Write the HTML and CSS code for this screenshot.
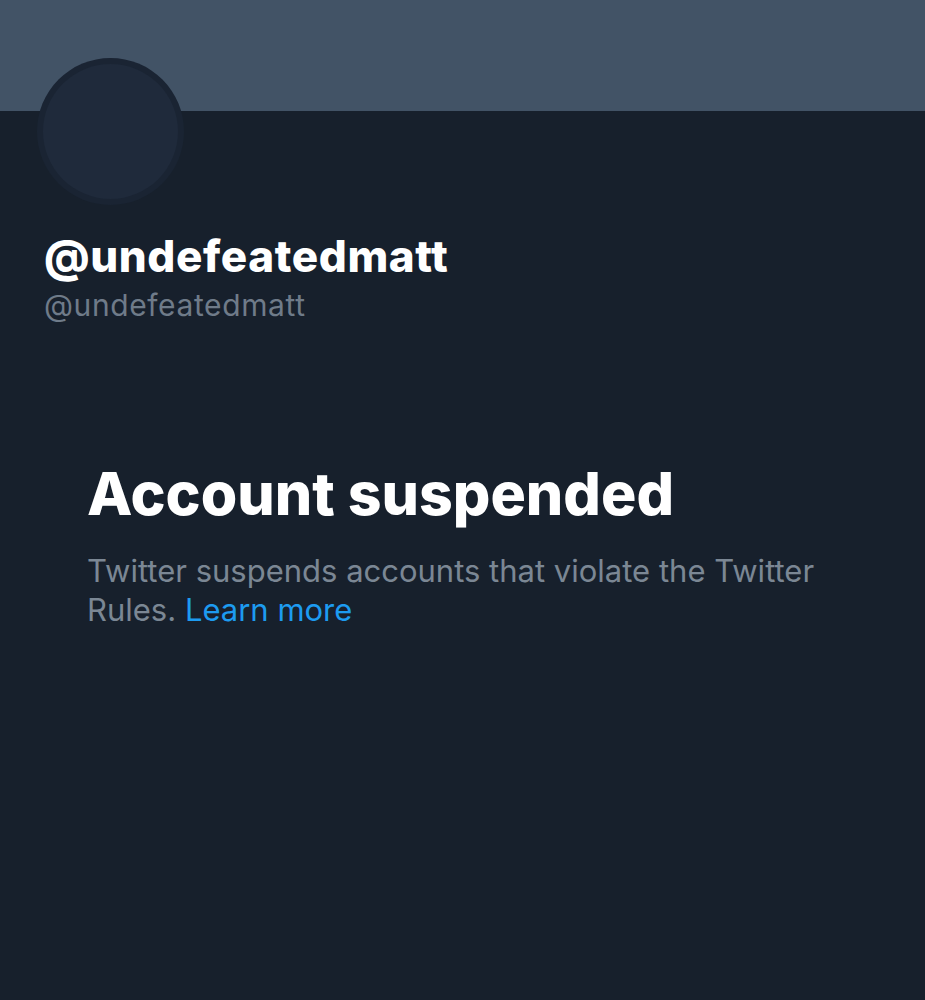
FILE: index.html
```html
<!DOCTYPE html>
<html>
<head>
<meta charset="utf-8">
<link rel="stylesheet" href="styles.css">
</head>
<body>
<div class="page">
  <div class="banner"></div>
  <div class="profile">
    <div class="avatar"><div class="avatar-inner"></div></div>
    <div class="name">@undefeatedmatt</div>
    <div class="handle">@undefeatedmatt</div>
  </div>
  <div class="notice">
    <h1 class="notice-title">Account suspended</h1>
    <p class="notice-text">Twitter suspends accounts that violate the Twitter Rules. <a class="link" href="#">Learn more</a></p>
  </div>
</div>
</body>
</html>
```
FILE: styles.css
```css
html, body {
  margin: 0;
  padding: 0;
  background: #17202c;
}
.page {
  width: 925px;
  height: 1000px;
  background: #17202c;
  font-family: Inter, "Liberation Sans", Arial, sans-serif;
  overflow: hidden;
}
.banner {
  height: 111px;
  background: #425366;
}
.profile {
  padding: 0 44px;
}
.avatar {
  width: 147px;
  height: 147px;
  margin-top: -53px;
  margin-left: -7px;
  border-radius: 50%;
  background: #1a2433;
  padding: 6px;
  box-sizing: border-box;
}
.avatar-inner {
  width: 100%;
  height: 100%;
  border-radius: 50%;
  background: #1f2a3b;
}
.name {
  margin-top: 26px;
  font-size: 44px;
  font-weight: 800;
  color: #ffffff;
  line-height: 50px;
  letter-spacing: 0.6px;
}
.handle {
  margin-top: 6px;
  font-size: 30px;
  color: #6f7b89;
  line-height: 36px;
  letter-spacing: 0.6px;
}
.notice {
  padding: 0 87px;
  margin-top: 137px;
}
.notice-title {
  margin: 0;
  font-size: 59px;
  font-weight: 800;
  color: #ffffff;
  line-height: 68px;
  letter-spacing: 0;
}
.notice-text {
  margin: 23px 0 0;
  font-size: 31px;
  line-height: 39px;
  color: #7b8794;
}
.link {
  color: #1d9bf0;
  text-decoration: none;
}
```
